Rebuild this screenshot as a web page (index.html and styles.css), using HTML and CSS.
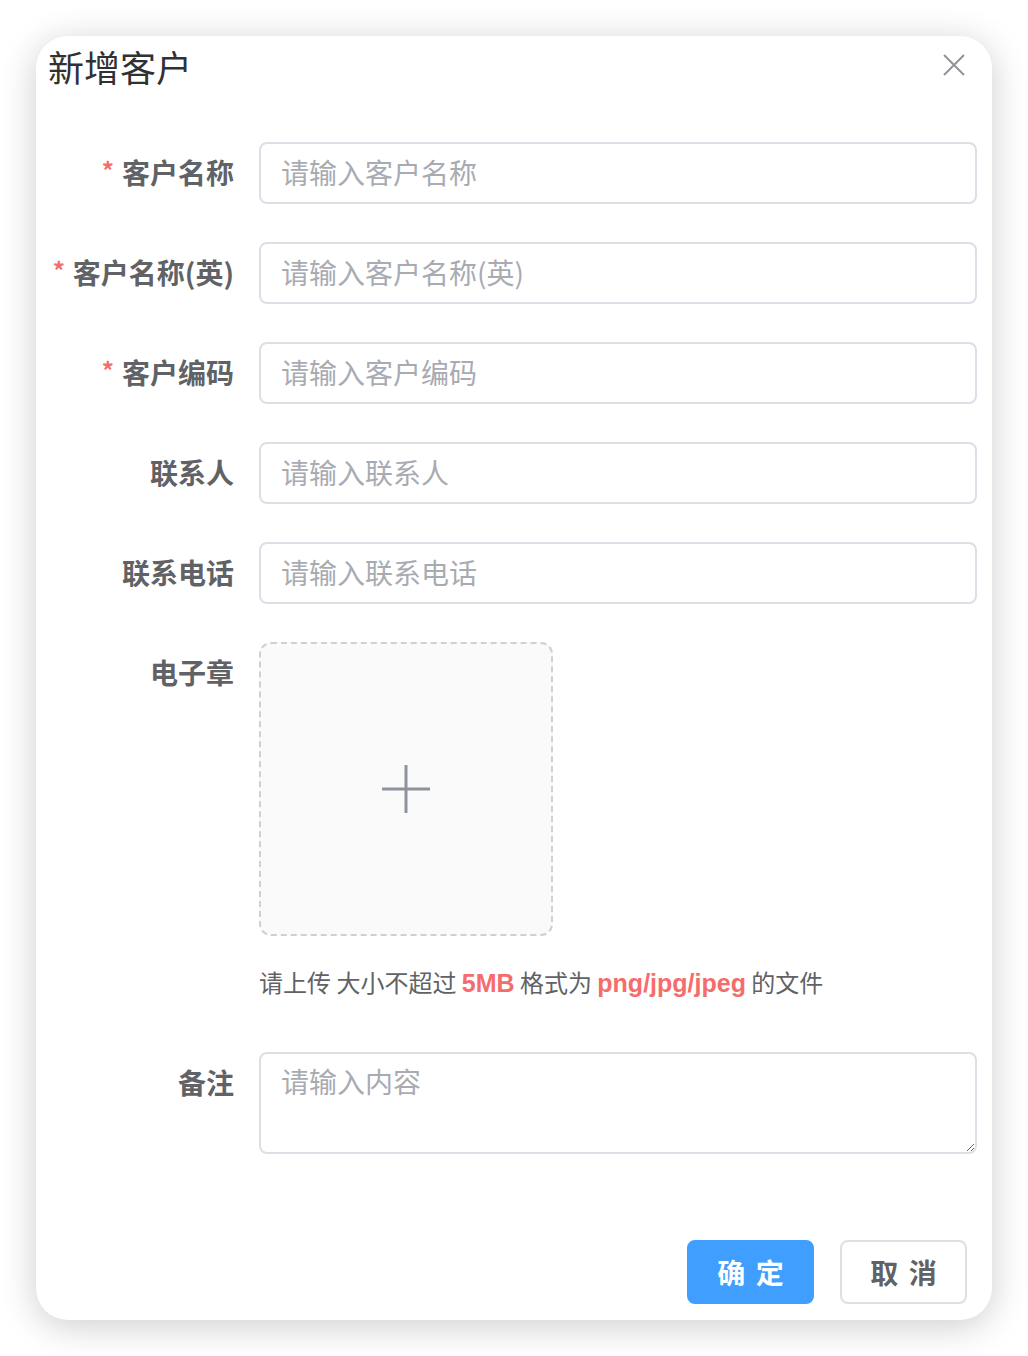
FILE: index.html
```html
<!DOCTYPE html>
<html lang="zh-CN">
<head>
<meta charset="utf-8">
<title>新增客户</title>
<link rel="stylesheet" href="styles.css">
</head>
<body>
<div class="dialog">
  <div class="header">
    <span class="title">新增客户</span>
    <button class="close" aria-label="关闭">
      <svg width="22" height="22" viewBox="0 0 22 22"><path d="M1 1 L21 21 M21 1 L1 21" stroke="#909399" stroke-width="2" fill="none"/></svg>
    </button>
  </div>
  <div class="body">
    <div class="item">
      <label class="label"><span class="req">*</span>客户名称</label>
      <div class="content"><input class="input" placeholder="请输入客户名称"></div>
    </div>
    <div class="item">
      <label class="label"><span class="req">*</span>客户名称(英)</label>
      <div class="content"><input class="input" placeholder="请输入客户名称(英)"></div>
    </div>
    <div class="item">
      <label class="label"><span class="req">*</span>客户编码</label>
      <div class="content"><input class="input" placeholder="请输入客户编码"></div>
    </div>
    <div class="item">
      <label class="label">联系人</label>
      <div class="content"><input class="input" placeholder="请输入联系人"></div>
    </div>
    <div class="item">
      <label class="label">联系电话</label>
      <div class="content"><input class="input" placeholder="请输入联系电话"></div>
    </div>
    <div class="item">
      <label class="label">电子章</label>
      <div class="content">
        <div class="upload">
          <svg width="48" height="48" viewBox="0 0 48 48"><path d="M24 1 V47 M1 24 H47" stroke="#8c939d" stroke-width="3" stroke-linecap="round" fill="none"/></svg>
        </div>
        <div class="tip">请上传 大小不超过 <b class="red">5MB</b> 格式为 <b class="red">png/jpg/jpeg</b> 的文件</div>
      </div>
    </div>
    <div class="item">
      <label class="label">备注</label>
      <div class="content"><textarea class="textarea" placeholder="请输入内容"></textarea></div>
    </div>
  </div>
  <div class="footer">
    <button class="btn primary">确 定</button>
    <button class="btn">取 消</button>
  </div>
</div>
</body>
</html>
```
FILE: styles.css
```css
* { box-sizing: border-box; }
html, body { margin: 0; padding: 0; background: #ffffff; }
body {
  font-family: "Noto Sans CJK SC", "Noto Sans", sans-serif;
  padding: 36px 0 0 36px;
  width: 1028px;
  height: 1356px;
  overflow: hidden;
}
.dialog {
  position: relative;
  width: 956px;
  height: 1284px;
  background: #fff;
  border-radius: 32px;
  box-shadow: 0 6px 36px rgba(0, 0, 0, 0.2);
  display: flex;
  flex-direction: column;
  padding-right: 15px;
}
.header {
  height: 64px;
  padding-left: 12px;
  padding-bottom: 4px;
  display: flex;
  align-items: center;
}
.title {
  font-size: 36px;
  line-height: 60px;
  color: #303133;
  font-weight: 400;
}
.close {
  position: absolute;
  top: 18px;
  right: 27px;
  width: 22px;
  height: 22px;
  padding: 0;
  border: 0;
  background: none;
  display: flex;
}
.body {
  margin-top: 42px;
}
.item {
  display: flex;
  margin-bottom: 38px;
}
.label {
  flex: 0 0 223px;
  height: 62px;
  padding-right: 25px;
  text-align: right;
  font-size: 28px;
  line-height: 60px;
  font-weight: 600;
  color: #606266;
  white-space: nowrap;
}
.req {
  color: #f56c6c;
  font-size: 24px;
  margin-right: 8px;
  font-weight: 700;
  vertical-align: top;
  line-height: 56px;
}
.content {
  flex: 1;
  min-width: 0;
}
.input {
  display: block;
  width: 100%;
  height: 62px;
  border: 2px solid #dcdfe6;
  border-radius: 8px;
  padding: 0 20px 3px;
  font-family: inherit;
  font-size: 28px;
  color: #606266;
  background: #fff;
  outline: none;
}
.input::placeholder, .textarea::placeholder { color: #a8abb2; }
.upload {
  width: 294px;
  height: 294px;
  border: 2px dashed #cdd0d6;
  border-radius: 12px;
  background: #fafafa;
  display: flex;
  align-items: center;
  justify-content: center;
}
.tip {
  height: 78px;
  padding-top: 28px;
  font-size: 24px;
  line-height: 36px;
  color: #606266;
  white-space: nowrap;
}
.red {
  color: #f56c6c;
  font-family: "Liberation Sans", Arial, sans-serif;
  font-size: 25px;
  font-weight: 700;
}
.textarea {
  display: block;
  width: 100%;
  height: 102px;
  border: 2px solid #dcdfe6;
  border-radius: 8px;
  padding: 6px 20px;
  font-family: inherit;
  font-size: 28px;
  line-height: 42px;
  color: #606266;
  resize: vertical;
  outline: none;
}
.footer {
  margin-top: auto;
  padding: 0 10px 16px 0;
  display: flex;
  justify-content: flex-end;
  gap: 26px;
}
.btn {
  width: 127px;
  height: 64px;
  border: 2px solid #dcdfe6;
  border-radius: 8px;
  background: #fff;
  color: #606266;
  font-family: inherit;
  font-size: 28px;
  font-weight: 600;
  letter-spacing: 2px;
  padding: 0 0 0 2px;
}
.btn.primary {
  background: #409eff;
  border-color: #409eff;
  color: #fff;
}
```
